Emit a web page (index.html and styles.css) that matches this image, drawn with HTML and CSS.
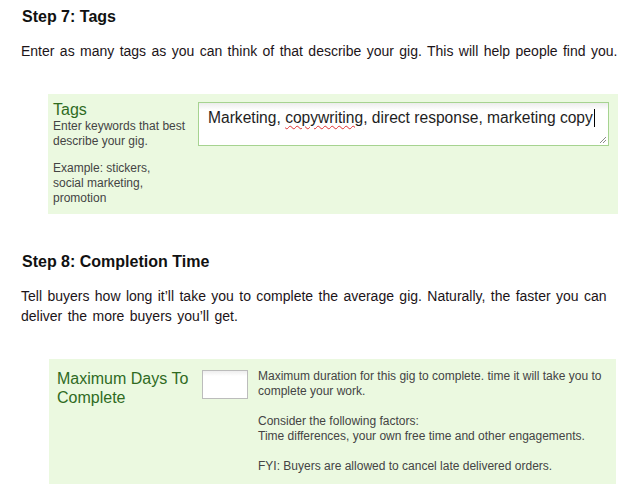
FILE: index.html
```html
<!DOCTYPE html>
<html lang="en">
<head>
<meta charset="utf-8">
<title>Gig steps</title>
<link rel="stylesheet" href="styles.css">
</head>
<body>
<div class="page">
  <section class="step">
    <h2 class="step-title">Step 7: Tags</h2>
    <p class="intro">Enter as many tags as you can think of that describe your gig. This will help people find you.</p>
    <div class="panel panel-tags">
      <div class="label-col">
        <div class="field-label">Tags</div>
        <p class="hint hint-desc">Enter keywords that best describe your gig.</p>
        <p class="hint hint-example">Example: stickers, social marketing, promotion</p>
      </div>
      <div class="textbox">
        <span class="textbox-text">Marketing, <span class="misspelled">copywriting</span>, direct response, marketing copy</span><span class="caret"></span>
        <svg class="grip" width="9" height="9" viewBox="0 0 9 9"><path d="M8 2 L2 8 M8 5 L5 8" stroke="#8a8a8a" stroke-width="1"/></svg>
      </div>
    </div>
  </section>

  <section class="step">
    <h2 class="step-title">Step 8: Completion Time</h2>
    <p class="intro">Tell buyers how long it’ll take you to complete the average gig. Naturally, the faster you can deliver the more buyers you’ll get.</p>
    <div class="panel panel-days">
      <div class="label-col label-col-days">
        <div class="field-label field-label-days">Maximum Days To Complete</div>
      </div>
      <div class="numbox"></div>
      <div class="help">
        <p class="hint">Maximum duration for this gig to complete. time it will take you to complete your work.</p>
        <p class="hint">Consider the following factors:<br>Time differences, your own free time and other engagements.</p>
        <p class="hint">FYI: Buyers are allowed to cancel late delivered orders.</p>
      </div>
    </div>
  </section>
</div>
</body>
</html>
```

FILE: styles.css
```css
html, body {
  margin: 0;
  padding: 0;
  background: #ffffff;
}

body {
  font-family: "Liberation Sans", Arial, sans-serif;
  color: #1a1a1a;
}

.page {
  padding: 7px 0 0 21px;
  width: 600px;
}

.step-title {
  margin: 0 0 0 1px;
  font-size: 16px;
  line-height: 20px;
  font-weight: bold;
  color: #111;
}

.intro {
  margin: 14px 0 33px 0;
  font-size: 14px;
  line-height: 20px;
  word-spacing: 1.5px;
  color: #1c1418;
}

.panel {
  background: #ebf9e0;
  display: flex;
  align-items: flex-start;
  box-sizing: border-box;
}

.panel-tags {
  margin: 0 0 38px 27px;
  width: 570px;
  padding: 6px 9px 8px 5px;
}

.panel-days {
  margin: 0 0 0 28px;
  width: 567px;
  padding: 10px 8px 10px 8px;
}

.label-col {
  width: 145px;
  flex: none;
}

.label-col-days {
  width: 145px;
}

.field-label {
  font-size: 16px;
  line-height: 19px;
  color: #2f6b1f;
}

.field-label-days {
  width: 135px;
}

.hint {
  margin: 0;
  font-size: 12px;
  line-height: 15px;
  color: #444444;
}

.hint-desc {
  width: 136px;
}

.hint-example {
  margin-top: 12px;
  width: 118px;
}

.textbox {
  position: relative;
  flex: none;
  box-sizing: border-box;
  width: 411px;
  height: 44px;
  margin-top: 2px;
  padding: 6px 8px 0 9px;
  border: 1px solid #a6d390;
  background: linear-gradient(#ececec 0px, #ffffff 7px, #ffffff 100%);
  font-size: 15.6px;
  line-height: 18px;
  color: #1e1e1e;
  white-space: nowrap;
}

.misspelled {
  text-decoration: underline wavy #e03030;
  text-decoration-thickness: 1px;
  text-underline-offset: 2px;
}

.caret {
  display: inline-block;
  width: 1px;
  height: 18px;
  background: #000;
  vertical-align: top;
  margin-left: 1px;
}

.grip {
  position: absolute;
  right: 1px;
  bottom: 1px;
}

.numbox {
  flex: none;
  box-sizing: border-box;
  width: 46px;
  height: 29px;
  margin-top: 1px;
  border: 1px solid #bcbcbc;
  background: linear-gradient(#eeeeee 0px, #ffffff 5px, #ffffff 100%);
}

.help {
  flex: 1;
  margin-left: 10px;
}

.help .hint + .hint {
  margin-top: 15px;
}
```
